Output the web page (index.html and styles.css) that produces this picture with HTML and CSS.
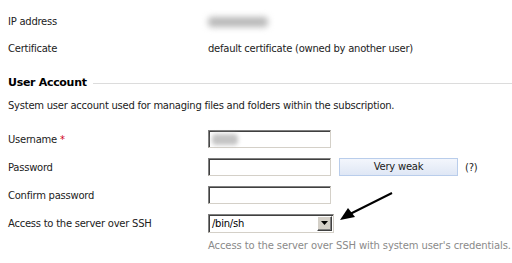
FILE: index.html
```html
<!DOCTYPE html>
<html>
<head>
<meta charset="utf-8">
<link rel="stylesheet" href="styles.css">
</head>
<body>
<div class="page">
  <div class="row info">
    <div class="label">IP address</div>
    <div class="value"><span class="blur ip"></span></div>
  </div>
  <div class="row info">
    <div class="label">Certificate</div>
    <div class="value">default certificate (owned by another user)</div>
  </div>
  <div class="heading">
    <span class="heading-text">User Account</span>
    <span class="heading-line"></span>
  </div>
  <div class="desc">System user account used for managing files and folders within the subscription.</div>
  <div class="row field">
    <div class="label">Username <span class="req">*</span></div>
    <div class="value"><div class="input"><span class="blur user"></span></div></div>
  </div>
  <div class="row field">
    <div class="label">Password</div>
    <div class="value">
      <div class="input"></div>
      <div class="strength">Very weak</div>
      <span class="help">(?)</span>
    </div>
  </div>
  <div class="row field">
    <div class="label">Confirm password</div>
    <div class="value"><div class="input"></div></div>
  </div>
  <div class="row field">
    <div class="label">Access to the server over SSH</div>
    <div class="value">
      <div class="select">
        <span class="select-text">/bin/sh</span>
        <span class="select-btn"><svg width="7" height="4" viewBox="0 0 7 4"><path d="M0 0H7L3.5 4Z" fill="#000"/></svg></span>
      </div>
    </div>
  </div>
  <div class="hint">Access to the server over SSH with system user's credentials.</div>
  <svg class="arrow" width="70" height="40" viewBox="0 0 70 40">
    <line x1="62" y1="7" x2="18" y2="29" stroke="#000" stroke-width="2"/>
    <path d="M10 34 L18 22 L25 31 Z" fill="#000"/>
  </svg>
</div>
</body>
</html>
```
FILE: styles.css
```css
html, body {
  margin: 0;
  padding: 0;
  background: #fff;
}
body {
  font-family: "DejaVu Sans", Verdana, sans-serif;
  font-size: 10px;
  letter-spacing: -0.25px;
  color: #222;
}
.page {
  position: relative;
  padding: 8px 0 0 8px;
  width: 504px;
  height: 255px;
}
.row {
  display: grid;
  grid-template-columns: 200px 1fr;
  align-items: center;
}
.info { height: 27px; }
.field { height: 28px; }
.value {
  display: flex;
  align-items: center;
}
.blur {
  display: inline-block;
  background: #bbb;
  border-radius: 4px;
}
.blur.ip {
  width: 60px;
  height: 10px;
  margin-left: 0;
  background: #b8b8b8;
  filter: blur(3px);
}
.blur.user {
  width: 26px;
  height: 11px;
  margin: 2px 0 0 2px;
  background: #c4c4c4;
  filter: blur(2px);
}
.heading {
  margin-top: 12px;
  height: 16px;
  display: flex;
  align-items: center;
}
.heading-text {
  font-weight: bold;
  font-size: 11px;
  letter-spacing: -0.3px;
  color: #000;
}
.heading-line {
  flex: 1;
  height: 1px;
  background: #dcdcdc;
  margin-left: 6px;
  margin-top: 2px;
}
.desc {
  margin-top: 8px;
  height: 16px;
  line-height: 16px;
  margin-bottom: 11px;
  white-space: nowrap;
}
.req { color: #d0021b; }
.input {
  box-sizing: border-box;
  width: 123px;
  height: 18px;
  border: 1px solid;
  border-color: #808080 #d4d0c8 #d4d0c8 #808080;
  box-shadow: inset 1px 1px 0 #404040;
  background: #fff;
  padding: 1px;
}
.strength {
  box-sizing: border-box;
  width: 119px;
  height: 18px;
  margin-left: 8px;
  border: 1px solid #b9cdeb;
  background: linear-gradient(#f3f6fc, #dfe7f5);
  text-align: center;
  line-height: 16px;
  color: #1a1a1a;
}
.help {
  margin-left: 7px;
}
.select {
  box-sizing: border-box;
  width: 126px;
  height: 19px;
  border: 1px solid;
  border-color: #808080 #d4d0c8 #d4d0c8 #808080;
  box-shadow: inset 1px 1px 0 #404040;
  background: #fff;
  display: flex;
  align-items: center;
  justify-content: space-between;
  padding: 1px 1px 1px 3px;
}
.select-text {
  color: #000;
}
.select-btn {
  box-sizing: border-box;
  width: 15px;
  height: 15px;
  background: #d4d0c8;
  border: 1px solid;
  border-color: #fff #404040 #404040 #fff;
  box-shadow: inset -1px -1px 0 #808080;
  display: flex;
  align-items: center;
  justify-content: center;
}
.hint {
  margin-left: 200px;
  color: #8a8a8a;
  margin-top: 3px;
  white-space: nowrap;
  letter-spacing: -0.1px;
}
.arrow {
  position: absolute;
  left: 330px;
  top: 186px;
}
```
